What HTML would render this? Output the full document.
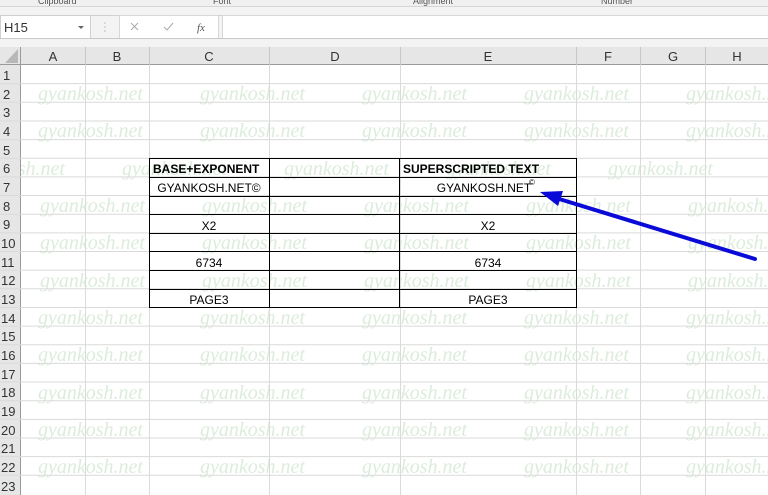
<!DOCTYPE html>
<html><head><meta charset="utf-8"><style>
body{margin:0;width:768px;height:495px;overflow:hidden;background:#fff;font-family:"Liberation Sans",sans-serif}
svg{display:block}
</style></head><body>
<svg width="768" height="495" viewBox="0 0 768 495" xmlns="http://www.w3.org/2000/svg" font-family="Liberation Sans, sans-serif">
<!-- watermarks (behind) -->
<g font-family="Liberation Serif, serif" font-style="italic" font-size="20" fill="#dcecdc">
<text x="38" y="100">gyankosh.net</text><text x="200" y="100">gyankosh.net</text><text x="362" y="100">gyankosh.net</text><text x="524" y="100">gyankosh.net</text><text x="686" y="100">gyankosh.net</text>
<text x="38" y="137">gyankosh.net</text><text x="200" y="137">gyankosh.net</text><text x="362" y="137">gyankosh.net</text><text x="524" y="137">gyankosh.net</text><text x="686" y="137">gyankosh.net</text>
<text x="-40" y="175">gyankosh.net</text><text x="122" y="175">gyankosh.net</text><text x="284" y="175">gyankosh.net</text><text x="446" y="175">gyankosh.net</text><text x="608" y="175">gyankosh.net</text>
<text x="40" y="212">gyankosh.net</text><text x="202" y="212">gyankosh.net</text><text x="364" y="212">gyankosh.net</text><text x="526" y="212">gyankosh.net</text><text x="688" y="212">gyankosh.net</text>
<text x="40" y="249">gyankosh.net</text><text x="202" y="249">gyankosh.net</text><text x="364" y="249">gyankosh.net</text><text x="526" y="249">gyankosh.net</text><text x="688" y="249">gyankosh.net</text>
<text x="40" y="287">gyankosh.net</text><text x="202" y="287">gyankosh.net</text><text x="364" y="287">gyankosh.net</text><text x="526" y="287">gyankosh.net</text><text x="688" y="287">gyankosh.net</text>
<text x="38" y="324">gyankosh.net</text><text x="200" y="324">gyankosh.net</text><text x="362" y="324">gyankosh.net</text><text x="524" y="324">gyankosh.net</text><text x="686" y="324">gyankosh.net</text>
<text x="38" y="361">gyankosh.net</text><text x="200" y="361">gyankosh.net</text><text x="362" y="361">gyankosh.net</text><text x="524" y="361">gyankosh.net</text><text x="686" y="361">gyankosh.net</text>
<text x="38" y="399">gyankosh.net</text><text x="200" y="399">gyankosh.net</text><text x="362" y="399">gyankosh.net</text><text x="524" y="399">gyankosh.net</text><text x="686" y="399">gyankosh.net</text>
<text x="38" y="436">gyankosh.net</text><text x="200" y="436">gyankosh.net</text><text x="362" y="436">gyankosh.net</text><text x="524" y="436">gyankosh.net</text><text x="686" y="436">gyankosh.net</text>
<text x="38" y="473">gyankosh.net</text><text x="200" y="473">gyankosh.net</text><text x="362" y="473">gyankosh.net</text><text x="524" y="473">gyankosh.net</text><text x="686" y="473">gyankosh.net</text>
</g>
<rect x="0" y="0" width="768" height="65" fill="#f3f3f3"/>
<rect x="0" y="0" width="768" height="6" fill="#f0f0f0"/>
<line x1="0" y1="6.5" x2="768" y2="6.5" stroke="#d6d6d6"/>
<g font-size="9" fill="#555">
<text x="38" y="4">Clipboard</text><text x="213" y="4">Font</text><text x="413" y="4">Alignment</text><text x="601" y="4">Number</text>
</g>
<line x1="0" y1="15.5" x2="768" y2="15.5" stroke="#d0d0d0"/>
<rect x="0.5" y="15.5" width="90" height="23" fill="#fff" stroke="#d0d0d0"/>
<text x="4" y="32" font-size="13" fill="#333">H15</text>
<path d="M78 26 l3 3 l3 -3z" fill="#666"/>
<g fill="#bbb"><circle cx="105" cy="23" r=".8"/><circle cx="105" cy="27" r=".8"/><circle cx="105" cy="31" r=".8"/></g>
<rect x="119.5" y="15.5" width="99" height="23" fill="#fff" stroke="#d8d8d8"/>
<path d="M131 23 l7 7 M138 23 l-7 7" stroke="#aaa" stroke-width="1"/>
<path d="M164 27 l3 3 l6 -7" stroke="#aaa" fill="none"/>
<text x="197" y="31" font-size="11" font-style="italic" font-family="Liberation Serif, serif" fill="#555">fx</text>
<rect x="222.5" y="15.5" width="550" height="23" fill="#fff" stroke="#d8d8d8"/>
<line x1="0" y1="38.5" x2="768" y2="38.5" stroke="#c8c8c8"/>
<rect x="0" y="47" width="768" height="18" fill="#e6e6e6"/>
<line x1="0" y1="64.5" x2="768" y2="64.5" stroke="#9a9a9a"/>
<path d="M18 49 L18 63 L5 63 Z" fill="#b8b8b8"/>
<g stroke="#c6c6c6">
<line x1="85.5" y1="47" x2="85.5" y2="65"/><line x1="149.5" y1="47" x2="149.5" y2="65"/>
<line x1="269.5" y1="47" x2="269.5" y2="65"/><line x1="400.5" y1="47" x2="400.5" y2="65"/>
<line x1="576.5" y1="47" x2="576.5" y2="65"/><line x1="640.5" y1="47" x2="640.5" y2="65"/>
<line x1="705.5" y1="47" x2="705.5" y2="65"/>
</g>
<g font-size="13" fill="#333" text-anchor="middle">
<text x="53" y="61">A</text><text x="117" y="61">B</text><text x="209" y="61">C</text><text x="335" y="61">D</text>
<text x="488" y="61">E</text><text x="608" y="61">F</text><text x="673" y="61">G</text><text x="737" y="61">H</text>
</g>
<rect x="0" y="65" width="20" height="430" fill="#e6e6e6"/>
<line x1="20.5" y1="47" x2="20.5" y2="495" stroke="#9a9a9a"/>
<g stroke="#dadada">
<line x1="85.5" y1="65" x2="85.5" y2="495"/><line x1="149.5" y1="65" x2="149.5" y2="495"/>
<line x1="269.5" y1="65" x2="269.5" y2="495"/><line x1="400.5" y1="65" x2="400.5" y2="495"/>
<line x1="576.5" y1="65" x2="576.5" y2="495"/><line x1="640.5" y1="65" x2="640.5" y2="495"/>
<line x1="705.5" y1="65" x2="705.5" y2="495"/>
<line x1="0" y1="83.65" x2="768" y2="83.65"/><line x1="0" y1="102.3" x2="768" y2="102.3"/>
<line x1="0" y1="120.95" x2="768" y2="120.95"/><line x1="0" y1="139.6" x2="768" y2="139.6"/>
<line x1="0" y1="158.25" x2="768" y2="158.25"/><line x1="0" y1="176.9" x2="768" y2="176.9"/>
<line x1="0" y1="195.55" x2="768" y2="195.55"/><line x1="0" y1="214.2" x2="768" y2="214.2"/>
<line x1="0" y1="232.85" x2="768" y2="232.85"/><line x1="0" y1="251.5" x2="768" y2="251.5"/>
<line x1="0" y1="270.15" x2="768" y2="270.15"/><line x1="0" y1="288.8" x2="768" y2="288.8"/>
<line x1="0" y1="307.45" x2="768" y2="307.45"/><line x1="0" y1="326.1" x2="768" y2="326.1"/>
<line x1="0" y1="344.75" x2="768" y2="344.75"/><line x1="0" y1="363.4" x2="768" y2="363.4"/>
<line x1="0" y1="382.05" x2="768" y2="382.05"/><line x1="0" y1="400.7" x2="768" y2="400.7"/>
<line x1="0" y1="419.35" x2="768" y2="419.35"/><line x1="0" y1="438" x2="768" y2="438"/>
<line x1="0" y1="456.65" x2="768" y2="456.65"/><line x1="0" y1="475.3" x2="768" y2="475.3"/>
</g>
<g font-size="13" fill="#333">
<text x="3" y="80">1</text><text x="3" y="99">2</text><text x="3" y="117">3</text><text x="3" y="136">4</text>
<text x="3" y="155">5</text><text x="3" y="173">6</text><text x="3" y="192">7</text><text x="3" y="211">8</text>
<text x="3" y="229">9</text><text x="1" y="248">10</text><text x="1" y="267">11</text><text x="1" y="285">12</text>
<text x="1" y="304">13</text><text x="1" y="323">14</text><text x="1" y="341">15</text><text x="1" y="360">16</text>
<text x="1" y="379">17</text><text x="1" y="397">18</text><text x="1" y="416">19</text><text x="1" y="435">20</text>
<text x="1" y="453">21</text><text x="1" y="472">22</text><text x="1" y="491">23</text>
</g>
<g stroke="#000" stroke-width="1">
<rect x="149.5" y="158.5" width="427" height="149" fill="none"/>
<line x1="269.5" y1="158" x2="269.5" y2="308"/><line x1="399.5" y1="158" x2="399.5" y2="308"/>
<line x1="149" y1="177.5" x2="577" y2="177.5"/><line x1="149" y1="196.5" x2="577" y2="196.5"/>
<line x1="149" y1="214.5" x2="577" y2="214.5"/><line x1="149" y1="233.5" x2="577" y2="233.5"/>
<line x1="149" y1="251.5" x2="577" y2="251.5"/><line x1="149" y1="270.5" x2="577" y2="270.5"/>
<line x1="149" y1="289.5" x2="577" y2="289.5"/>
</g>
<g font-size="12" fill="#000">
<text x="153" y="173" font-weight="bold">BASE+EXPONENT</text>
<text x="403" y="173" font-weight="bold">SUPERSCRIPTED TEXT</text>
<g text-anchor="middle">
<text x="209" y="192">GYANKOSH.NET©</text>
<text x="484" y="192">GYANKOSH.NET</text>
<text x="209" y="230">X2</text><text x="488" y="230">X2</text>
<text x="209" y="267">6734</text><text x="488" y="267">6734</text>
<text x="209" y="304">PAGE3</text><text x="488" y="304">PAGE3</text>
</g>
<text x="529" y="185" font-size="8">©</text>
</g>
<line x1="755" y1="259" x2="556" y2="198" stroke="#0a0ad8" stroke-width="4" stroke-linecap="round"/>
<path d="M540 192 L563 191 L558 206 Z" fill="#0a0ad8"/>
</svg>
</body></html>
